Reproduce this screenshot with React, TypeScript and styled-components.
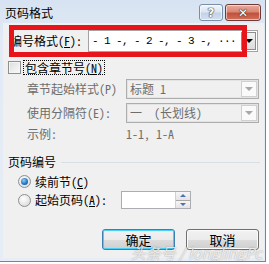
import React from 'react';
import styled, { createGlobalStyle } from 'styled-components';

const GlobalStyle = createGlobalStyle`
	html, body {
		margin: 0;
		padding: 0;
		background: #ffffff;
		overflow: hidden;
	}
	body {
		font-family: "Noto Sans Mono CJK SC", "Noto Sans CJK SC", sans-serif;
		font-size: 12px;
		color: #000;
	}
`;

const Window = styled('div')`
	position: relative;
	box-sizing: border-box;
	margin-left: -5px;
	width: 271px;
	height: 262px;
	display: flex;
	flex-direction: column;
	padding: 0 1px 3px 7px;
	background: linear-gradient(#d7e3f2, #e2eaf5 40px, #e6edf6);
	border: 1px solid #4a90d0;
	border-top: none;
	overflow: hidden;
`;

const TitleBar = styled('div')`
	height: 23px;
	flex: none;
	display: flex;
	align-items: flex-start;
	padding: 0 3px 0 2px;
`;

const Title = styled('div')`
	font-family: "Noto Sans CJK SC", sans-serif;
	font-size: 12px;
	line-height: 14px;
	margin-top: 6px;
	flex: 1;
`;

const CaptionButton = styled('div')<{ $close?: boolean }>`
	box-sizing: border-box;
	margin-top: 4px;
	width: ${(p) => (p.$close ? 36 : 24)}px;
	height: 17px;
	margin-left: ${(p) => (p.$close ? 2 : 0)}px;
	border-radius: 3px;
	border: 1px solid ${(p) => (p.$close ? '#6e3a35' : '#7a8ea8')};
	background: ${(p) =>
		p.$close
			? 'linear-gradient(#e9a99b, #d98877 45%, #c2503c 55%, #d0705a)'
			: 'linear-gradient(#f0f5fb, #dbe6f3 45%, #c3d3e7 55%, #d2e0f0)'};
	box-shadow: inset 0 0 0 1px rgba(255, 255, 255, 0.55);
	display: flex;
	align-items: center;
	justify-content: center;
	color: #fff;
	font-family: "DejaVu Sans", sans-serif;
	font-weight: bold;
	font-size: 12px;
	text-shadow: 0 0 1px #333, 0 0 1px #333, 0 0 1px #333;
`;

const Client = styled('div')`
	position: relative;
	flex: 1;
	background: #f0f0f0;
	display: flex;
	flex-direction: column;
`;

const FormatRow = styled('div')`
	display: flex;
	align-items: center;
	height: 22px;
	margin-top: 7px;
	padding-left: 7px;
`;

const FormatLabel = styled('div')`
	width: 78px;
	flex: none;
	white-space: nowrap;
	line-height: 14px;
`;

const Combo = styled('div')`
	box-sizing: border-box;
	display: flex;
	width: 170px;
	height: 22px;
	border: 1px solid #a3a3a3;
	background: #fff;
`;

const ComboText = styled('div')`
	flex: 1;
	padding-left: 3px;
	font-family: "Liberation Mono", monospace;
	font-size: 11px;
	letter-spacing: -0.6px;
	line-height: 20px;
	white-space: nowrap;
	overflow: hidden;
`;

const DropButton = styled('div')<{ $disabled?: boolean }>`
	box-sizing: border-box;
	width: ${(p) => (p.$disabled ? 16 : 15)}px;
	margin: 1px;
	border: 1px solid ${(p) => (p.$disabled ? '#d0d0d0' : '#8c8c8c')};
	background: ${(p) => (p.$disabled ? '#fafafa' : 'linear-gradient(#f2f2f2, #dcdcdc)')};
	display: flex;
	align-items: center;
	justify-content: center;
	&::after {
		content: '';
		border-left: 4px solid transparent;
		border-right: 4px solid transparent;
		border-top: 4px solid ${(p) => (p.$disabled ? '#a8a8a8' : '#000')};
	}
`;

const CheckRow = styled('div')`
	display: flex;
	align-items: center;
	height: 15px;
	margin-top: 8px;
	padding-left: 5px;
`;

const CheckBox = styled('div')`
	box-sizing: border-box;
	width: 13px;
	height: 13px;
	border: 1px solid #8e8f8f;
	background: linear-gradient(135deg, #dcdcdc, #fbfbfb);
	box-shadow: inset 0 0 0 1px #f4f4f4;
`;

const FocusLabel = styled('div')`
	margin-left: 2px;
	padding: 0 1px;
	border: 1px dotted #000;
	line-height: 13px;
	white-space: nowrap;
`;

const FieldGrid = styled('div')`
	display: grid;
	grid-template-columns: 99px 133px;
	grid-template-rows: 20px 20px 14px;
	row-gap: 4px;
	align-items: center;
	margin-top: 4px;
	padding-left: 24px;
	color: #6d6d6d;
	white-space: nowrap;
	line-height: 14px;
`;

const Select = styled('div')`
	box-sizing: border-box;
	height: 20px;
	display: flex;
	border: 1px solid #adadad;
	box-shadow: inset 0 0 0 1px #e3e3e3;
	background: #f0f0f0;
`;

const SelectText = styled('div')`
	flex: 1;
	padding-left: 3px;
	line-height: 18px;
`;

const GroupHeader = styled('div')`
	display: flex;
	align-items: center;
	margin-top: 14px;
	padding-left: 5px;
	padding-right: 4px;
	height: 14px;
	line-height: 14px;
	&::after {
		content: '';
		flex: 1;
		height: 1px;
		margin-left: 5px;
		background: #d5dfe5;
	}
`;

const RadioRow = styled('div')<{ $top: number; $height: number }>`
	display: flex;
	align-items: center;
	margin-top: ${(p) => p.$top}px;
	padding-left: 15px;
	height: ${(p) => p.$height}px;
	line-height: 14px;
	white-space: nowrap;
`;

const Radio = styled('div')<{ $checked?: boolean }>`
	box-sizing: border-box;
	width: 13px;
	height: 13px;
	border-radius: 50%;
	border: 1px solid #8e8f8f;
	background: radial-gradient(circle at 40% 35%, #ffffff, #d4d4d4);
	margin-right: 4px;
	display: flex;
	align-items: center;
	justify-content: center;
	&::after {
		content: '';
		display: ${(p) => (p.$checked ? 'block' : 'none')};
		width: 7px;
		height: 7px;
		border-radius: 50%;
		background: radial-gradient(circle at 40% 35%, #8ad0f8, #1f6fbe 60%, #0f4f8f);
	}
`;

const Spin = styled('div')`
	box-sizing: border-box;
	display: flex;
	width: 70px;
	height: 18px;
	margin-left: 14px;
	border: 1px solid #abadb3;
	background: #fff;
`;

const SpinButtons = styled('div')`
	margin-left: auto;
	width: 14px;
	display: flex;
	flex-direction: column;
	border-left: 1px solid #d0d0d0;
`;

const SpinHalf = styled('div')<{ $down?: boolean }>`
	flex: 1;
	display: flex;
	align-items: center;
	justify-content: center;
	background: linear-gradient(#f6f6f6, #e4e4e4);
	border-top: ${(p) => (p.$down ? '1px solid #a8a8a8' : 'none')};
	&::after {
		content: '';
		border-left: 3px solid transparent;
		border-right: 3px solid transparent;
		${(p) => (p.$down ? 'border-top' : 'border-bottom')}: 3px solid #4f6fb8;
	}
`;

const ButtonRow = styled('div')`
	display: flex;
	justify-content: flex-end;
	gap: 11px;
	margin-top: 20px;
	padding-right: 5px;
`;

const PushButton = styled('div')<{ $default?: boolean }>`
	box-sizing: border-box;
	width: 73px;
	height: 21px;
	border-radius: 3px;
	border: 1px solid ${(p) => (p.$default ? '#3c7fb1' : '#707070')};
	background: linear-gradient(#f2f2f2, #ebebeb 50%, #dddddd 50%, #cfcfcf);
	box-shadow: ${(p) => (p.$default ? 'inset 0 0 0 1px #48d0f8' : 'inset 0 0 0 1px #fbfbfb')};
	display: flex;
	align-items: center;
	justify-content: center;
	font-family: "Noto Sans CJK SC", sans-serif;
	font-size: 13px;
	line-height: 14px;
`;

const Annotation = styled('div')`
	position: absolute;
	left: 13px;
	top: 25px;
	width: 238px;
	height: 32px;
	box-sizing: border-box;
	border: 5px solid #e8141b;
	pointer-events: none;
`;

const Watermark = styled('div')`
	position: absolute;
	right: 2px;
	bottom: -3px;
	font-family: "Noto Sans CJK SC", sans-serif;
	font-style: italic;
	font-size: 15px;
	line-height: 16px;
	color: rgba(255, 255, 255, 0.8);
	text-shadow: 0 0 1px rgba(0, 0, 0, 0.3), 0 0 2px rgba(0, 0, 0, 0.15);
	white-space: nowrap;
`;

export default function App() {
	return (
		<>
			<GlobalStyle />
			<Window>
				<TitleBar>
					<Title>页码格式</Title>
					<CaptionButton>?</CaptionButton>
					<CaptionButton $close>✕</CaptionButton>
				</TitleBar>
				<Client>
					<FormatRow>
						<FormatLabel>
							编号格式(<u>F</u>):
						</FormatLabel>
						<Combo>
							<ComboText>- 1 -, - 2 -, - 3 -, ···</ComboText>
							<DropButton />
						</Combo>
					</FormatRow>

					<CheckRow>
						<CheckBox />
						<FocusLabel>
							包含章节号(<u>N</u>)
						</FocusLabel>
					</CheckRow>

					<FieldGrid>
						<span>章节起始样式(P)</span>
						<Select>
							<SelectText>标题 1</SelectText>
							<DropButton $disabled />
						</Select>
						<span>使用分隔符(E):</span>
						<Select>
							<SelectText>一　(长划线)</SelectText>
							<DropButton $disabled />
						</Select>
						<span>示例:</span>
						<span>1-1, 1-A</span>
					</FieldGrid>

					<GroupHeader>页码编号</GroupHeader>
					<RadioRow $top={6} $height={13}>
						<Radio $checked />
						续前节(<u>C</u>)
					</RadioRow>
					<RadioRow $top={3} $height={18}>
						<Radio />
						起始页码(<u>A</u>):
						<Spin>
							<SpinButtons>
								<SpinHalf />
								<SpinHalf $down />
							</SpinButtons>
						</Spin>
					</RadioRow>

					<ButtonRow>
						<PushButton $default>确定</PushButton>
						<PushButton>取消</PushButton>
					</ButtonRow>
					<Watermark>头条号 / longlingPc</Watermark>
				</Client>
				<Annotation />
			</Window>
		</>
	);
}
